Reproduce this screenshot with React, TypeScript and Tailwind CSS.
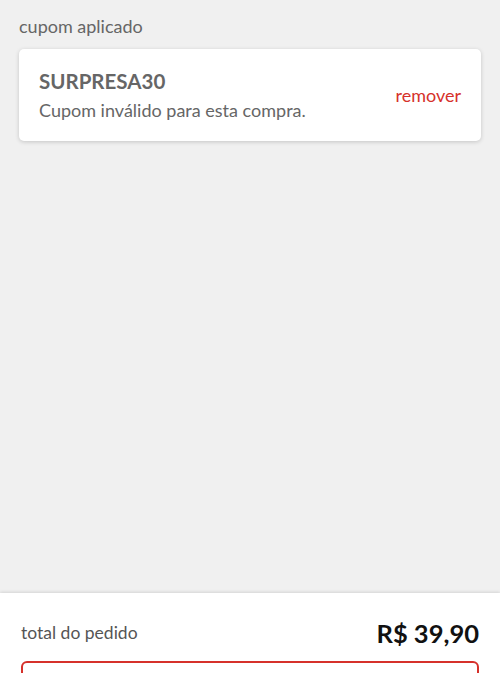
export default function App() {
  return (
    <div
      className="flex h-[673px] w-[500px] flex-col overflow-hidden bg-[#f0f0f0]"
      style={{ fontFamily: "Lato, 'Noto Sans', sans-serif" }}
    >
      <div className="flex-1 px-[19px] pt-[15px]">
        <p className="text-[18px] leading-[22px] text-[#666666]">cupom aplicado</p>

        <div className="mt-[12px] flex items-center justify-between rounded-[5px] bg-white py-[19px] pl-[20px] pr-[20px] shadow-[0_1px_4px_rgba(0,0,0,0.18)]">
          <div>
            <p className="text-[20.5px] font-bold leading-[26px] text-[#666666]">SURPRESA30</p>
            <p className="mt-[5px] text-[18px] leading-[23px] text-[#666666]">
              Cupom inválido para esta compra.
            </p>
          </div>
          <button className="text-[18px] leading-[22px] text-[#d6312b]">remover</button>
        </div>
      </div>

      <div className="h-[80px] shrink-0 bg-white px-[21px] pt-[24px] shadow-[0_-1px_3px_rgba(0,0,0,0.12)]">
        <div className="flex h-[32px] items-center justify-between">
          <span className="text-[17.5px] text-[#555555]">total do pedido</span>
          <span className="text-[25.5px] font-bold text-[#111111]">R$ 39,90</span>
        </div>
        <div className="mt-[12px] h-[40px] rounded-[6px] border-2 border-[#d6312b]" />
      </div>
    </div>
  );
}
